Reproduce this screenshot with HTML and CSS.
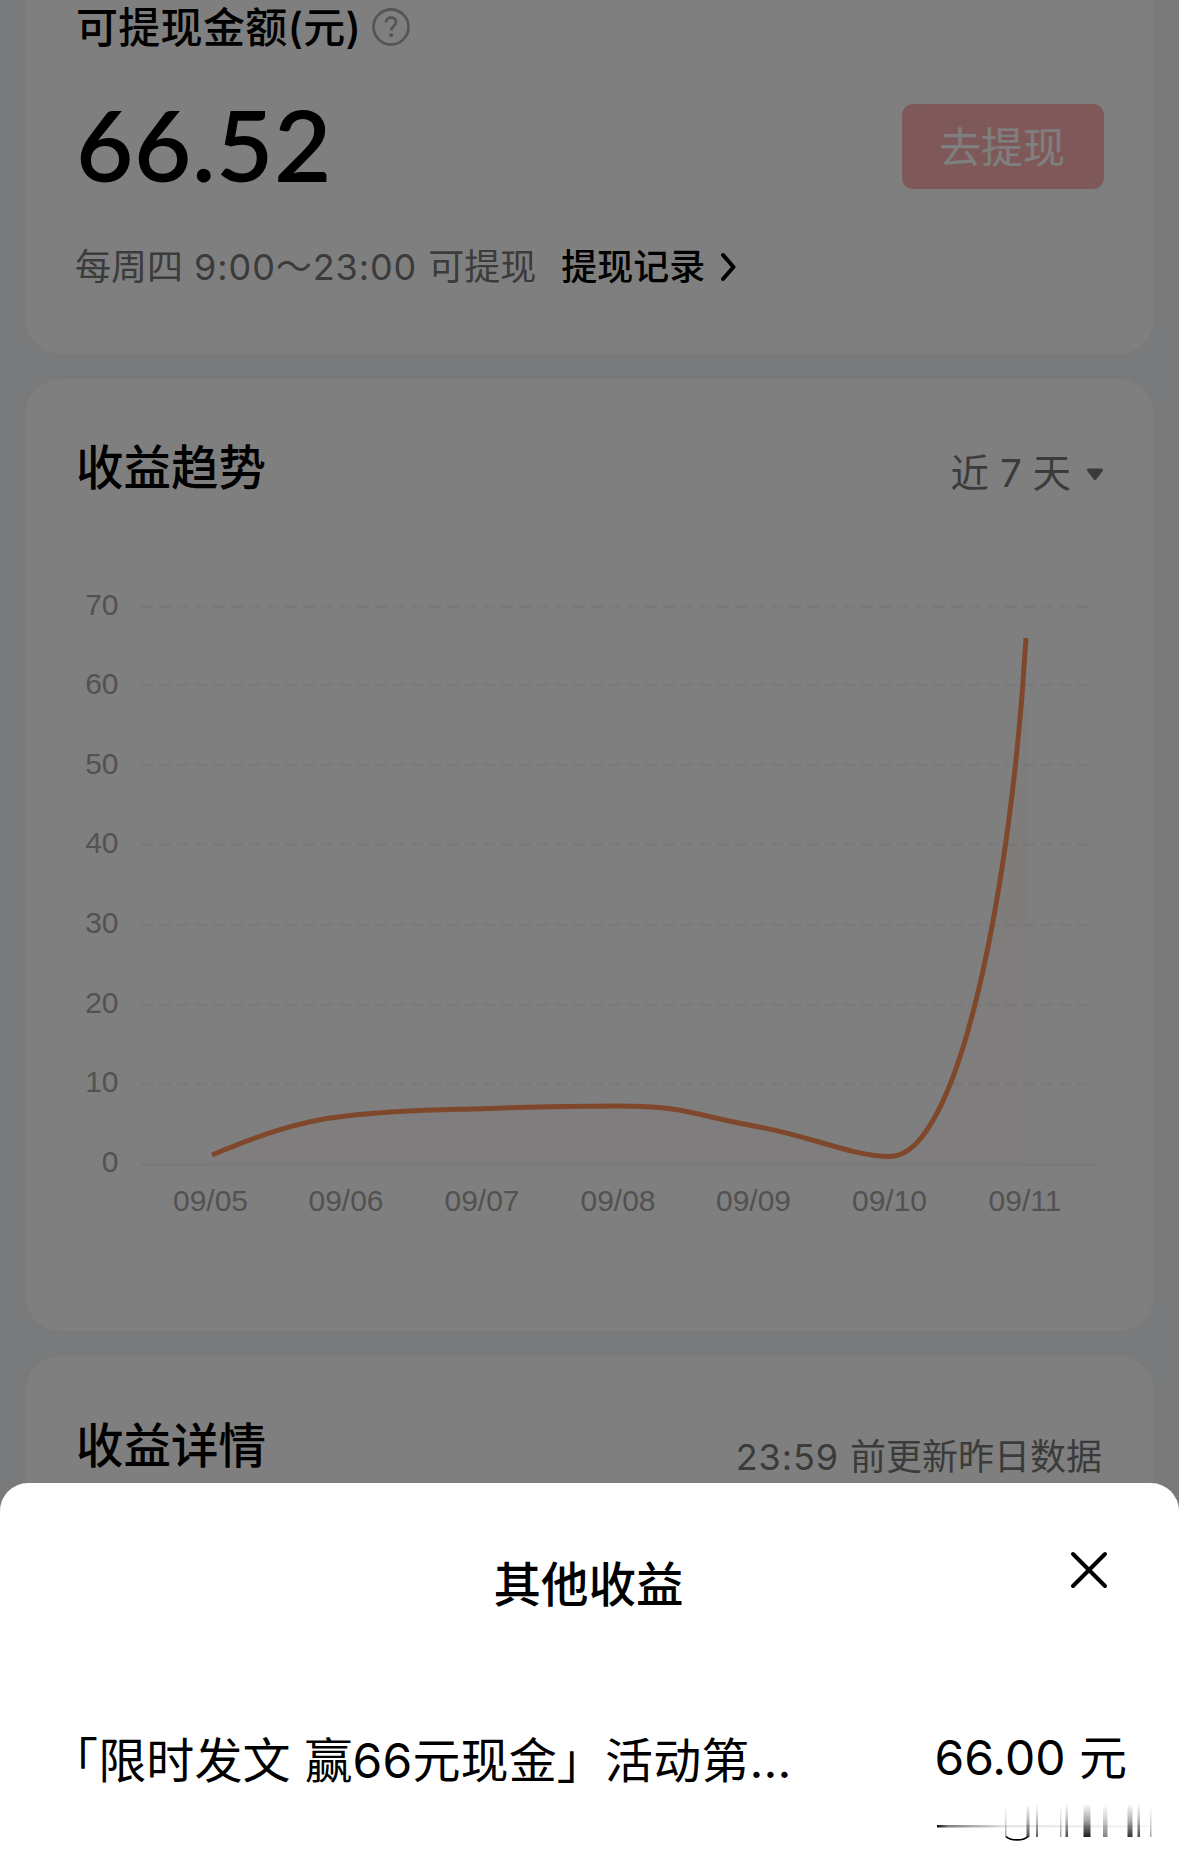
FILE: index.html
```
<!DOCTYPE html>
<html lang="zh-CN">
<head>
    <meta charset="UTF-8">
    <meta name="viewport" content="width=device-width, initial-scale=1.0">
    <link rel="stylesheet" href="styles.css">
    <title>其他收益</title>
</head>
<body>
    <div class="container">
        <div class="card balance-card">
            <div class="balance-title">
                <span class="title-text">可提现金额(元)</span>
                <svg class="help-icon" width="40" height="40" viewBox="0 0 40 40" fill="none" stroke="#aaa" stroke-width="2.8">
                    <circle cx="20" cy="20" r="17.5"/>
                    <path d="M15 15.5c0-3 2.2-5 5-5s5 2 5 4.6c0 4-4.8 4.4-4.8 8.4"/>
                    <circle cx="20.2" cy="28.2" r="2" fill="#aaa" stroke="none"/>
                </svg>
            </div>
            <div class="balance-row">
                <span class="balance-amount">66.52</span>
                <button class="withdraw-button">去提现</button>
            </div>
            <div class="balance-info">
                <span class="info-text">每周四<span class="digits"> 9:00～23:00 </span>可提现</span>
                <span class="info-link">提现记录</span>
                <svg class="arrow" width="20" height="34" viewBox="0 0 20 34" fill="none" stroke="#000" stroke-width="4" stroke-linecap="round" stroke-linejoin="round">
                    <path d="M4 5l10.500 12L4 29"/>
                </svg>
            </div>
        </div>

        <div class="card trend-card">
            <div class="card-header">
                <h2>收益趋势</h2>
                <div class="range-select">
                    <span>近 7 天</span>
                    <svg class="caret" width="18" height="14" viewBox="0 0 18 14"><path d="M2.5 2h13l-6.500 8.5z" fill="#777" stroke="#777" stroke-width="3" stroke-linejoin="round"/></svg>
                </div>
            </div>
            <svg class="chart" width="1027" height="650" viewBox="0 0 1027 650">
                <defs>
                    <linearGradient id="areaFill" x1="0" y1="58" x2="0" y2="584" gradientUnits="userSpaceOnUse">
                        <stop offset="0" stop-color="#ff8850" stop-opacity="0.05"/>
                        <stop offset="1" stop-color="#ff8080" stop-opacity="0.03"/>
                    </linearGradient>
                </defs>
                <g class="grid">
                    <path d="M64 26.5H1017M64 105H1017M64 185H1017M64 264.5H1017M64 345H1017M64 425H1017M64 504H1017"/>
                </g>
                <path class="axis" d="M64 584.5H1019"/>
                <g class="labels labels-y">
                    <text x="41.500" y="34.500">70</text>
                    <text x="41.500" y="114">60</text>
                    <text x="41.500" y="194">50</text>
                    <text x="41.500" y="273">40</text>
                    <text x="41.500" y="353">30</text>
                    <text x="41.500" y="433">20</text>
                    <text x="41.500" y="512">10</text>
                    <text x="41.500" y="592">0</text>
                </g>
                <g class="labels labels-x">
                    <text x="133.500" y="631">09/05</text>
                    <text x="269" y="631">09/06</text>
                    <text x="405" y="631">09/07</text>
                    <text x="541" y="631">09/08</text>
                    <text x="676.500" y="631">09/09</text>
                    <text x="812.500" y="631">09/10</text>
                    <text x="948" y="631">09/11</text>
                </g>
                <path fill="url(#areaFill)" d="M135 575C178 557 220 541 269 536C318 530 360 530 405 528.700C450 527 496 526 541 526C610 526 612 534 677 546C735 556 775 576.500 813 576.500C883 577 935 300 949 58V584H135z"/>
                <path class="line" d="M135 575C178 557 220 541 269 536C318 530 360 530 405 528.700C450 527 496 526 541 526C610 526 612 534 677 546C735 556 775 576.500 813 576.500C883 577 935 300 949 58"/>
            </svg>
        </div>

        <div class="card detail-card">
            <div class="card-header">
                <h2>收益详情</h2>
                <span class="update-time"><span class="digits">23:59 </span>前更新昨日数据</span>
            </div>
        </div>
    </div>

    <div class="modal">
        <div class="modal-content">
            <h2>其他收益</h2>
            <svg class="close" width="44" height="44" viewBox="0 0 44 44" fill="none" stroke="#000" stroke-width="4" stroke-linecap="round">
                <path d="M6 6l32 32M38 6L6 38"/>
            </svg>
            <div class="income-item">
                <span class="income-name">「限时发文 赢66元现金」活动第...</span>
                <span class="income-value">66.00 元</span>
            </div>
            <!-- smudged strip under the amount -->
            <svg class="smudge" width="230" height="44" viewBox="0 0 230 44">
                <defs>
                    <linearGradient id="fadeUp" x1="0" y1="4" x2="0" y2="37" gradientUnits="userSpaceOnUse">
                        <stop offset="0" stop-color="#000" stop-opacity="0"/>
                        <stop offset="0.5" stop-color="#000" stop-opacity="0.35"/>
                        <stop offset="1" stop-color="#000" stop-opacity="0.9"/>
                    </linearGradient>
                    <linearGradient id="fadeRight" x1="0" y1="0" x2="200" y2="0" gradientUnits="userSpaceOnUse">
                        <stop offset="0" stop-color="#000"/>
                        <stop offset="0.06" stop-color="#000" stop-opacity="0.5"/>
                        <stop offset="0.35" stop-color="#000" stop-opacity="0.1"/>
                        <stop offset="1" stop-color="#000" stop-opacity="0.04"/>
                    </linearGradient>
                </defs>
                <rect x="1" y="25" width="212" height="2.500" fill="url(#fadeRight)"/>
                <g class="smudge-bars" fill="url(#fadeUp)">
                    <rect x="69" y="4" width="1.500" height="33" opacity="0.4"/>
                    <rect x="90.500" y="4" width="3" height="33" opacity="0.8"/>
                    <rect x="100" y="4" width="2" height="33" opacity="0.7"/>
                    <rect x="124" y="4" width="1.500" height="33" opacity="0.4"/>
                    <rect x="129.500" y="4" width="2.500" height="33" opacity="0.8"/>
                    <rect x="147.500" y="4" width="7" height="33"/>
                    <rect x="167" y="4" width="4.500" height="33" opacity="0.55"/>
                    <rect x="191.500" y="4" width="5" height="33" opacity="0.9"/>
                    <rect x="201.500" y="4" width="2.500" height="33" opacity="0.8"/>
                    <rect x="214" y="4" width="1.500" height="33" opacity="0.4"/>
                </g>
                <path d="M70 36.500C74 41 88 41 92 36.500" fill="none" stroke="#000" stroke-width="1.800"/>
            </svg>
        </div>
    </div>
</body>
</html>
```
FILE: styles.css
```
body {
    font-family: Inter, "Noto Sans CJK SC", sans-serif;
    margin: 0;
    padding: 0;
    background-color: #f2f4f8;
    color: #000;
    height: 1864px;
    overflow: hidden;
}

h2 {
    margin: 0;
    font-size: 47.5px;
    line-height: 60px;
    font-weight: 500;
}

.container {
    display: flex;
    flex-direction: column;
    gap: 25px;
    padding: 0 25px;
}

.card {
    background-color: #fff;
    border-radius: 36px;
    padding: 0 50px 0 51px;
    box-sizing: border-box;
    white-space: nowrap;
}

.balance-card {
    height: 354px;
    border-radius: 0 0 36px 36px;
}

.balance-title {
    display: flex;
    align-items: center;
    gap: 10px;
    height: 54px;
    font-size: 42px;
    font-weight: 500;
}

.title-text {
    letter-spacing: 0.3px;
    padding-bottom: 5px;
}

.balance-row {
    display: flex;
    justify-content: space-between;
    align-items: center;
    height: 85px;
    margin-top: 50px;
}

.balance-amount {
    font-family: Lato, sans-serif;
    font-size: 99px;
    font-weight: 600;
    letter-spacing: 0.6px;
    padding-bottom: 7px;
}

.withdraw-button {
    width: 202px;
    height: 85px;
    padding: 0 2px 4px 0;
    border: none;
    border-radius: 11px;
    background-color: #ffb3b3;
    color: #fff;
    font-family: inherit;
    font-size: 42px;
    cursor: pointer;
}

.balance-info {
    display: flex;
    align-items: center;
    margin-top: 48px;
    height: 54px;
    font-size: 36px;
}

.info-text {
    color: #777;
    margin-left: -1px;
}

.digits {
    white-space: pre;
    letter-spacing: 0.9px;
}

.info-link {
    font-weight: 500;
    margin: 0 14px 0 25px;
}

.arrow {
    padding-top: 6px;
}

.card-header {
    display: flex;
    justify-content: space-between;
    align-items: flex-start;
    height: 60px;
}

.trend-card {
    height: 952px;
    padding-top: 59px;
}

.range-select {
    display: flex;
    align-items: center;
    gap: 15px;
    color: #777;
    font-size: 38.5px;
    line-height: 55px;
    padding-top: 8px;
}

.caret {
    margin-top: 3px;
}

.chart {
    display: block;
    margin: 82px 0 0 1px;
}

.grid path {
    stroke: #f5f5f5;
    stroke-width: 3;
    stroke-dasharray: 12 6;
}

.axis {
    stroke: #f3f6f6;
    stroke-width: 3;
}

.labels {
    font-family: "Liberation Sans", Arial, sans-serif;
    font-size: 30px;
    fill: #a5a5a5;
}

.labels-y {
    text-anchor: end;
}

.labels-x {
    text-anchor: middle;
}

.line {
    fill: none;
    stroke: #ff9058;
    stroke-width: 5;
}

.detail-card {
    height: 600px;
    padding-top: 60px;
}

.update-time {
    color: #777;
    font-size: 36px;
    line-height: 52px;
    padding-top: 15px;
    margin-right: 2px;
}

.modal {
    position: fixed;
    left: 0;
    top: 0;
    width: 100%;
    height: 100%;
    display: flex;
    align-items: flex-end;
    background-color: rgba(0, 0, 0, 0.5);
}

.modal-content {
    position: relative;
    width: 100%;
    height: 381px;
    box-sizing: border-box;
    padding-top: 72px;
    background-color: #fff;
    border-radius: 28px 28px 0 0;
    text-align: center;
}

.modal-content h2 {
    padding-right: 2px;
}

.close {
    position: absolute;
    top: 65px;
    right: 68px;
    cursor: pointer;
}

.income-item {
    display: flex;
    justify-content: space-between;
    align-items: center;
    height: 70px;
    margin-top: 107px;
    padding: 0 52px 0 50px;
    font-size: 48px;
    white-space: nowrap;
}

.income-name {
    letter-spacing: 0.15px;
}

.income-value {
    padding-bottom: 7px;
}

.smudge {
    position: absolute;
    left: 936px;
    top: 317px;
}

.smudge-bars {
    filter: blur(0.6px);
}
```
